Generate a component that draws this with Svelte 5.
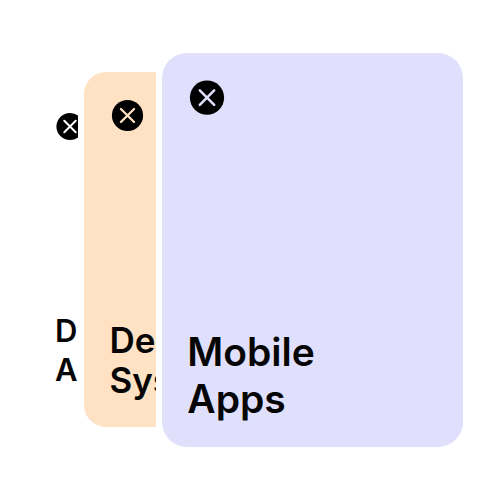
<script>
  const cards = [
    { name: 'back', lines: ['D', 'A'], ink: '#ffffff' },
    { name: 'middle', lines: ['De', 'Sys'], ink: '#ffe1c4' },
    { name: 'front', lines: ['Mobile', 'Apps'], ink: '#e0e0fd' }
  ];
</script>

<main>
  {#each cards as card}
    <section class="card {card.name}">
      <svg viewBox="0 0 34 34" aria-hidden="true">
        <circle cx="17" cy="17" r="17.1" fill="#000" />
        <path d="M9.8 9.8 24.2 24.2M24.2 9.8 9.8 24.2" stroke={card.ink} stroke-width="2.5" stroke-linecap="round" />
      </svg>
      <h2>{#each card.lines as line}<span>{line}</span>{/each}</h2>
    </section>
  {/each}
</main>

<style>
  :global(body) {
    margin: 0;
    background: #fff;
  }
  main {
    box-sizing: border-box;
    width: 500px;
    height: 500px;
    padding-left: 30px;
    display: flex;
    align-items: center;
    overflow: hidden;
    font-family: Inter, "Liberation Sans", sans-serif;
    color: #050505;
  }
  .card {
    box-sizing: border-box;
    flex: none;
    display: flex;
    flex-direction: column;
    justify-content: space-between;
    align-items: flex-start;
    overflow: hidden;
  }
  svg {
    display: block;
    flex: none;
    overflow: visible;
  }
  h2 {
    margin: 0;
    font-weight: 600;
    white-space: nowrap;
  }
  span {
    display: block;
  }
  .back {
    width: 48px;
    height: 320px;
    padding: 23px 0 20.5px 26px;
    margin-right: 5.5px;
  }
  .back svg {
    width: 27px;
    height: 27px;
    transform: translate(0.5px, 0);
  }
  .back h2 {
    font-size: 31px;
    line-height: 38.6px;
    margin-left: -1px;
  }
  .middle {
    width: 72.5px;
    height: 355px;
    padding: 28.2px 0 27px 28px;
    margin: 0 6px 0.6px 0;
    background: #ffe1c4;
    border-radius: 22px 0 0 22px;
  }
  .middle svg {
    width: 31px;
    height: 31px;
  }
  .middle h2 {
    font-size: 35px;
    line-height: 40px;
    margin-left: -2px;
  }
  .front {
    width: 301px;
    height: 394px;
    padding: 28px 0 24px 28px;
    background: #e0e0fd;
    border-radius: 25px;
  }
  .front svg {
    width: 34px;
    height: 34px;
    transform: translateY(-0.4px);
  }
  .front h2 {
    font-size: 39px;
    line-height: 46.8px;
    margin-left: -2.7px;
  }
</style>
